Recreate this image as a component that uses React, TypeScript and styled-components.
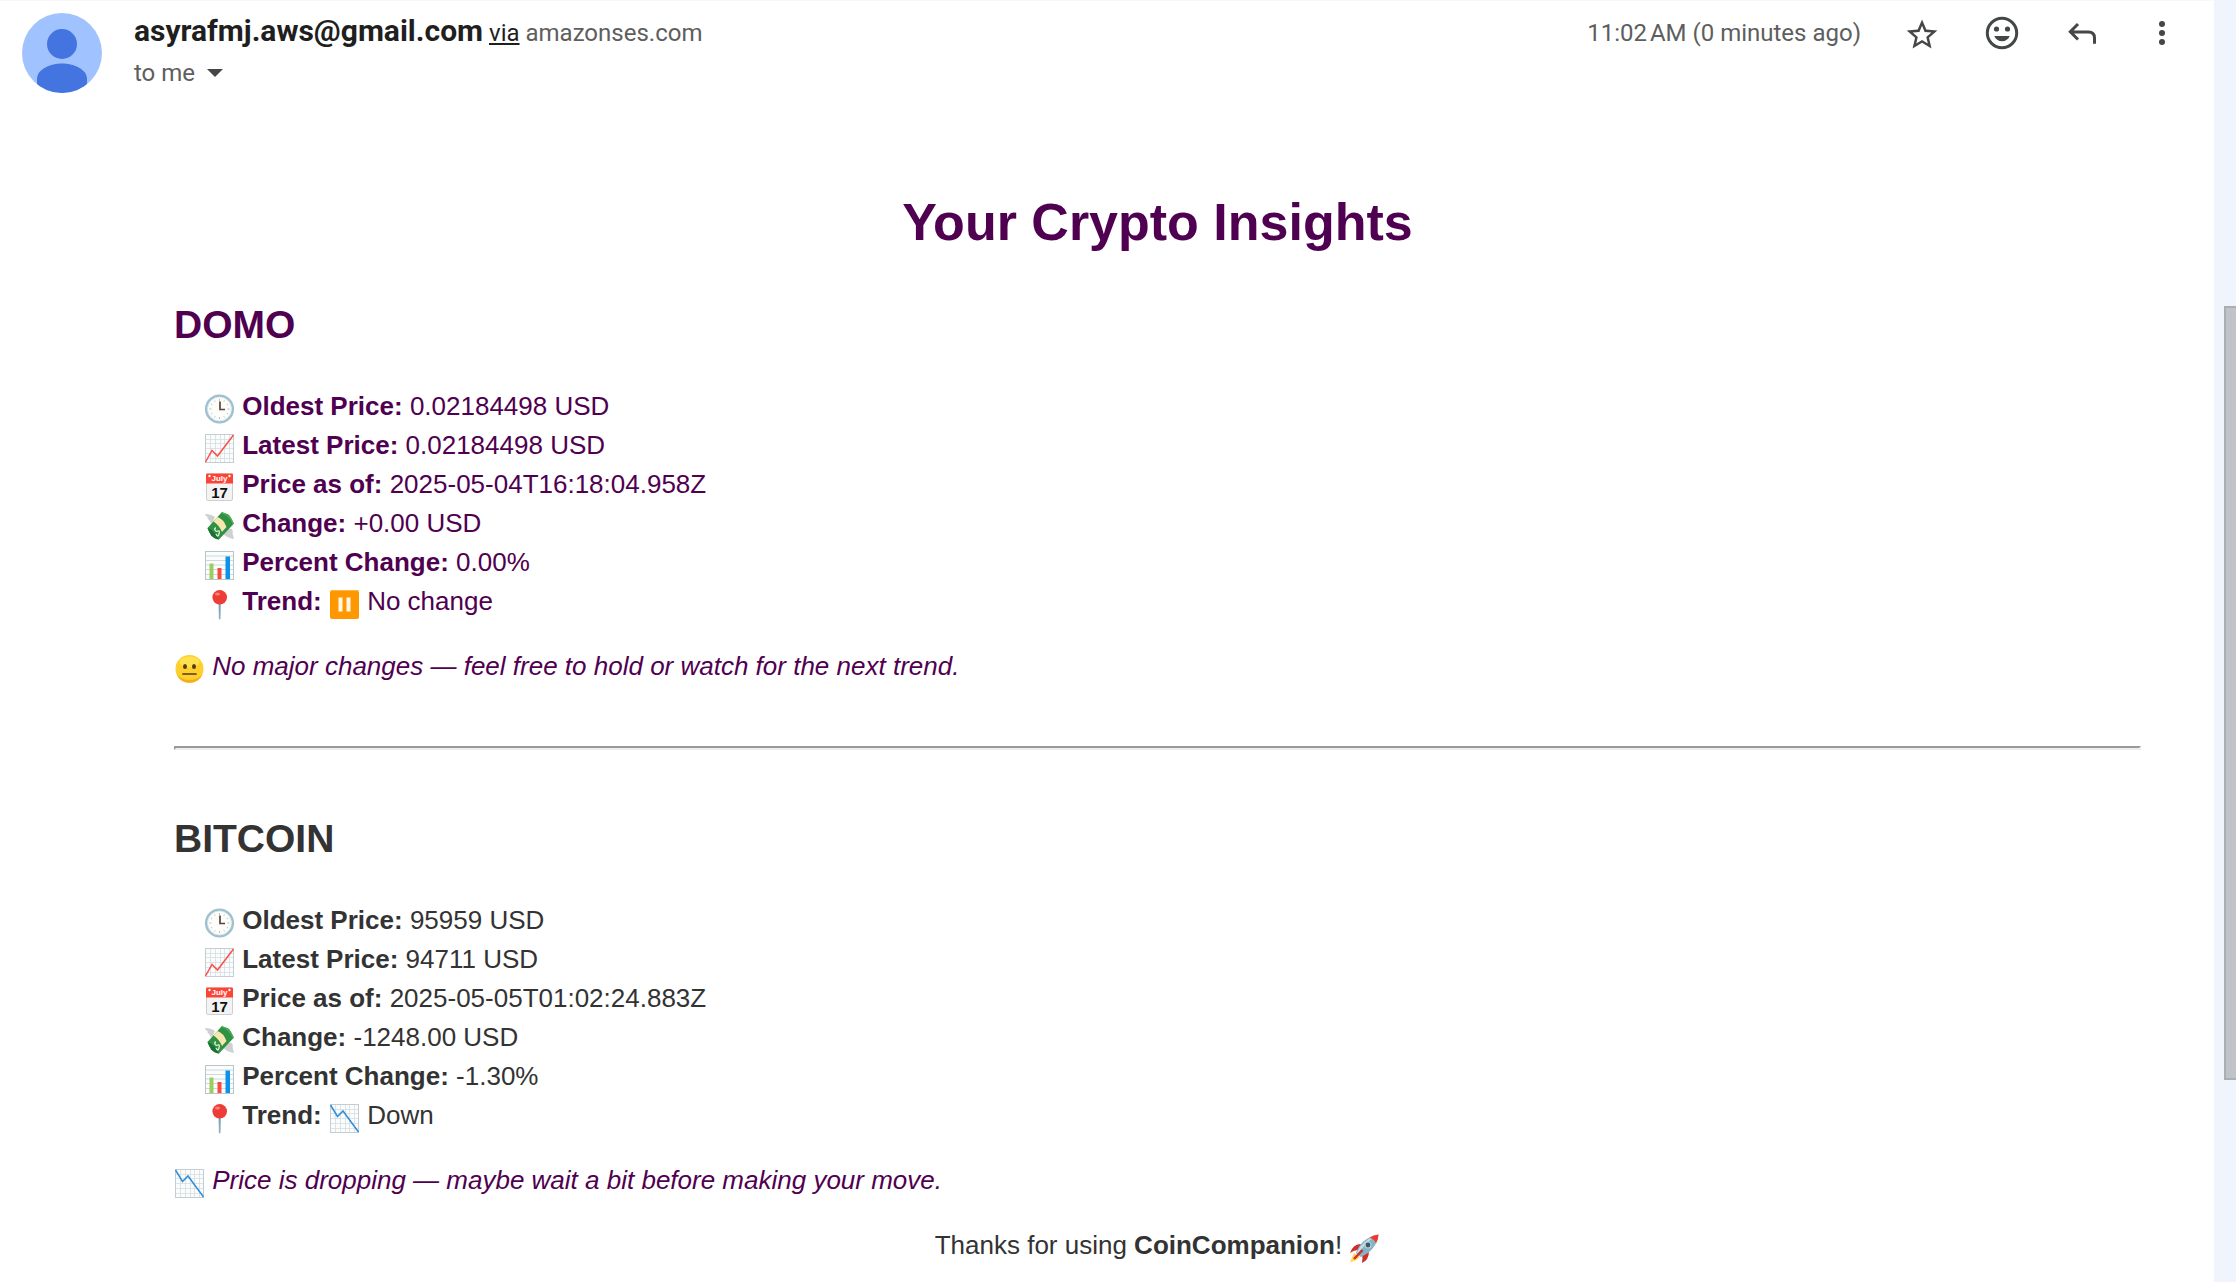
import React from 'react';
import styled, { createGlobalStyle } from 'styled-components';

const Global = createGlobalStyle`
  * { box-sizing: border-box; }
  body { margin: 0; background: #eff4fd; }
`;

const Shell = styled.div`
  display: flex;
  min-height: 100vh;
  overflow: hidden;
  font-family: "Liberation Sans", Arial, sans-serif;
`;

const Message = styled.article`
  flex: 1;
  min-width: 0;
  background: #fff;
  border-top: 1px solid #f8f8f9;
`;

const Rail = styled.aside`
  width: 22px;
  height: 100vh;
  padding: 306px 0 0 10px;
`;

const Thumb = styled.div`
  height: 774px;
  background: #c0c4c8;
  border: 2px solid #abafb2;
  border-right: 0;
`;

const Header = styled.header`
  display: flex;
  align-items: flex-start;
  padding: 12px 32px 0 22px;
  color: #5e5e5e;
  font-family: Roboto, "Noto Sans", sans-serif;
  font-size: 24px;
  line-height: 40px;
`;

const Sender = styled.div`
  flex: 1;
  padding-left: 32px;
`;

const Name = styled.span`
  color: #1f1f1f;
  font-size: 30px;
  font-weight: 700;
  line-height: 30px;
`;

const Via = styled.a`
  color: #1f1f1f;
  text-decoration: underline;
`;

const Recipient = styled.button`
  display: flex;
  align-items: center;
  gap: 12px;
  padding: 0;
  border: 0;
  background: none;
  color: inherit;
  font: inherit;
`;

const Actions = styled.div`
  display: flex;
  gap: 40px;
  padding-left: 41px;
`;

const IconButton = styled.button`
  display: flex;
  width: 40px;
  height: 40px;
  padding: 0;
  border: 0;
  background: none;
  color: #444746;
`;

const Body = styled.div`
  padding: 90px 73px 26px 174px;
  color: #333;
  font-size: 26px;
  line-height: 39px;
`;

const Title = styled.h1`
  margin: 0 0 35px;
  color: #500050;
  font-size: 52px;
  line-height: 78px;
  text-align: center;
`;

const Coin = styled.section<{ $quoted?: boolean }>`
  color: ${(p) => (p.$quoted ? '#500050' : '#333')};
`;

const CoinName = styled.h2`
  margin: 0 0 33px;
  font-size: 39px;
  line-height: 58px;
`;

const Facts = styled.ul`
  margin: 0 0 26px;
  padding: 0 0 0 30px;
  list-style: none;
`;

const Advice = styled.p`
  margin: 0;
  color: #500050;
  font-style: italic;
`;

const Divider = styled.hr`
  height: 4px;
  margin: 60px 0;
  border: 2px solid;
  border-color: #9a9a9a #eee #eee #9a9a9a;
`;

const Thanks = styled.p`
  margin: 26px 0 0;
  text-align: center;
`;

const Glyph = styled.svg`
  width: 31px;
  height: 30px;
  vertical-align: -9px;
`;

type Kind = 'clock' | 'up' | 'down' | 'calendar' | 'money' | 'bars' | 'pin' | 'pause' | 'neutral' | 'rocket';

const Grid = () => (
  <>
    <rect x="1.5" y="1.5" width="28" height="28" fill="#fbfdfd" stroke="#c3cdd3" />
    <path d="M6.5 2v27M11.5 2v27M16.5 2v27M20.5 2v27M25.5 2v27M2 6.5h27M2 10.5h27M2 15.5h27M2 20.5h27M2 25.5h27" stroke="#d5dde1" strokeWidth=".8" />
  </>
);

const art: Record<Kind, React.ReactNode> = {
  clock: (
    <>
      <circle cx="15.5" cy="15" r="13.3" fill="#fdfdfa" stroke="#9fc0cf" strokeWidth="2.6" />
      <circle cx="15.5" cy="15" r="12" fill="none" stroke="#d6e5eb" strokeWidth=".8" />
      <path d="M15.5 5v2M15.5 23v2M5.5 15h2M23.5 15h2M10.5 6.5l.7 1.2M20.5 6.5l-.7 1.2M7 10l1.2.7M24 10l-1.2.7M7 20l1.2-.7M24 20l-1.2-.7M10.5 23.5l.7-1.2M20.5 23.5l-.7-1.2" stroke="#a9abac" strokeWidth=".8" />
      <path d="M16 7.5V15.5h5" fill="none" stroke="#5c4240" strokeWidth="1.7" />
    </>
  ),
  up: (
    <>
      <Grid />
      <path d="M1.5 29L8 17.5l5.5 5.5L29.5 2" fill="none" stroke="#f9504a" strokeWidth="1.5" />
    </>
  ),
  down: (
    <>
      <Grid />
      <path d="M1.5 2L8.5 13.5l5.5-5.5L29.5 29" fill="none" stroke="#2f8fd8" strokeWidth="1.5" />
    </>
  ),
  calendar: (
    <>
      <rect x="2.5" y="2" width="26" height="26.5" rx="1.5" fill="#f3f3f3" stroke="#cfcfcf" />
      <path d="M2 2.5q0-1 1-1h25q1 0 1 1V11.5H2z" fill="#fb4438" />
      <circle cx="5.5" cy="4" r="1.2" fill="#fff" />
      <circle cx="25.5" cy="4" r="1.2" fill="#fff" />
      <text x="15.5" y="9" textAnchor="middle" fontSize="8" fontWeight="700" fill="#fff">July</text>
      <text x="15.5" y="25.5" textAnchor="middle" fontSize="15" fontWeight="700" fill="#111">17</text>
    </>
  ),
  money: (
    <>
      <path d="M1 3q6 0 10 3l-3 7Q6 11 5 9 3 8 3.5 6 1 5 1 3z" fill="#cdd1d2" />
      <path d="M20 17l8 1 1 3q-1 1 0 3l1 4q-7-1-12-6z" fill="#cdd1d2" />
      <path d="M3.5 17L17.5 1.5l6 1.5q3 1 6 10L15 28.5Q6 26 3.5 17z" fill="#2f9142" />
      <path d="M3.5 17Q10 19 15 28.5q-4 0-8-4z" fill="#1d7031" />
      <path d="M17.5 1.5Q26 4 29.5 13" fill="none" stroke="#4dac55" strokeWidth="1.5" />
      <path d="M9.5 10.5l4-4.5q6 2 9 10l-4.5 5Q15 14 9.5 10.5z" fill="#f7e6ad" />
      <path d="M12 17q-2 0-1 2t3 1 1 3-3 0" fill="none" stroke="#e5efdc" strokeWidth="1.3" />
    </>
  ),
  bars: (
    <>
      <rect x="1.5" y="1.5" width="28" height="28" fill="#fbfdfd" stroke="#b9c5cc" />
      <path d="M2 6h27M2 10.5h27M2 15h27M2 19.5h27M2 24.5h27" stroke="#cfd8dc" />
      <path d="M5.5 13.5h4V29h-4z" fill="#9bcd61" />
      <path d="M13.5 18h4v11h-4z" fill="#f94a3e" />
      <path d="M21.5 6.5h4.5V29h-4.5z" fill="#0b92ea" />
    </>
  ),
  pin: (
    <>
      <path d="M14.8 14h1.7l-.4 16h-.8z" fill="#7fa5b7" stroke="#7fa5b7" strokeWidth=".6" />
      <circle cx="15.7" cy="8.3" r="7.3" fill="#ee3c36" />
      <ellipse cx="13.5" cy="5" rx="2.5" ry="1.6" fill="#ff8178" />
    </>
  ),
  pause: (
    <>
      <rect x="1" y="1" width="29" height="29" rx="2" fill="#ff9800" />
      <path d="M2 3q0-1.5 1.5-1.5h24q1.5 0 1.5 1.5" fill="none" stroke="#ffb74a" />
      <path d="M9.5 8.5h4v14h-4zM17.5 8.5h4v14h-4z" fill="#fff8ea" />
    </>
  ),
  neutral: (
    <>
      <circle cx="15.5" cy="15" r="14" fill="#ffcf2e" />
      <path d="M2.5 20a14 14 0 0 0 26 0q-5 6-13 6t-13-6z" fill="#f5ae1b" />
      <ellipse cx="15.5" cy="8" rx="10" ry="5.5" fill="#ffe04d" />
      <ellipse cx="11" cy="12.5" rx="2" ry="2.5" fill="#543b12" />
      <ellipse cx="20" cy="12.5" rx="2" ry="2.5" fill="#543b12" />
      <path d="M9 20h13" stroke="#543b12" strokeWidth="1.7" strokeLinecap="round" />
    </>
  ),
  rocket: (
    <>
      <path d="M5 20l-4 9q5 0 10-5z" fill="#ffd75a" />
      <path d="M12 11q-8 0-11 9 4-3 8-3zM20 18q0 9-7 12 1-5 0-9z" fill="#cf2f2b" />
      <path d="M7 20Q12 5 29.5 1.5 27 18 11.5 24z" fill="#84b3c6" />
      <path d="M8 19Q14 7 27 3 16 10 9 21z" fill="#c4dde6" />
      <path d="M20.5 4.5Q25 2 29.5 1.5q0 4.5-2.5 9-1-4-6.5-6z" fill="#ee3b2f" />
      <circle cx="19" cy="12" r="3" fill="#3c5766" stroke="#b9ced6" strokeWidth="1.2" />
      <path d="M13.5 17L5 26" stroke="#cf2f2b" strokeWidth="2.5" />
    </>
  ),
};

const Emoji = ({ kind }: { kind: Kind }) => (
  <Glyph viewBox="0 0 31 30" overflow="visible" aria-hidden="true">
    {art[kind]}
  </Glyph>
);

interface CoinData {
  name: string;
  quoted?: boolean;
  facts: [Kind, string, string, Kind?][];
  mood: Kind;
  advice: string;
}

const domo: CoinData = {
  name: 'DOMO',
  quoted: true,
  facts: [
    ['clock', 'Oldest Price:', '0.02184498 USD'],
    ['up', 'Latest Price:', '0.02184498 USD'],
    ['calendar', 'Price as of:', '2025-05-04T16:18:04.958Z'],
    ['money', 'Change:', '+0.00 USD'],
    ['bars', 'Percent Change:', '0.00%'],
    ['pin', 'Trend:', 'No change', 'pause'],
  ],
  mood: 'neutral',
  advice: 'No major changes — feel free to hold or watch for the next trend.',
};

const bitcoin: CoinData = {
  name: 'BITCOIN',
  facts: [
    ['clock', 'Oldest Price:', '95959 USD'],
    ['up', 'Latest Price:', '94711 USD'],
    ['calendar', 'Price as of:', '2025-05-05T01:02:24.883Z'],
    ['money', 'Change:', '-1248.00 USD'],
    ['bars', 'Percent Change:', '-1.30%'],
    ['pin', 'Trend:', 'Down', 'down'],
  ],
  mood: 'down',
  advice: 'Price is dropping — maybe wait a bit before making your move.',
};

const CoinReport = ({ coin }: { coin: CoinData }) => (
  <Coin $quoted={coin.quoted}>
    <CoinName>{coin.name}</CoinName>
    <Facts>
      {coin.facts.map(([kind, label, value, mark]) => (
        <li key={label}>
          <Emoji kind={kind} /> <strong>{label}</strong> {mark && <><Emoji kind={mark} />{' '}</>}{value}
        </li>
      ))}
    </Facts>
    <Advice>
      <Emoji kind={coin.mood} /> {coin.advice}
    </Advice>
  </Coin>
);

const Avatar = () => (
  <svg width="80" height="80" viewBox="0 0 80 80" aria-hidden="true">
    <clipPath id="disc"><circle cx="40" cy="40" r="40" /></clipPath>
    <g clipPath="url(#disc)">
      <path d="M0 0h80v80H0z" fill="#a0c3ff" />
      <circle cx="40" cy="31" r="15" fill="#4374e0" />
      <path d="M15 80V66c0-10 14-15.5 25-15.5S65 56 65 66v14z" fill="#4374e0" />
    </g>
  </svg>
);

export default function App() {
  return (
    <Shell>
      <Global />
      <Message>
        <Header>
          <Avatar />
          <Sender>
            <div>
              <Name>asyrafmj.aws@gmail.com</Name> <Via href="#via">via</Via> amazonses.com
            </div>
            <Recipient>
              to me
              <svg width="16" height="8" viewBox="0 0 16 8" aria-hidden="true"><path d="M0 0h16L8 8z" fill="#444746" /></svg>
            </Recipient>
          </Sender>
          <time>{'11:02\u202fAM (0 minutes ago)'}</time>
          <Actions>
            <IconButton aria-label="Star">
              <svg width="40" height="40" viewBox="-1.07 -2.2 26.1 26.1" fill="currentColor"><path d="M22 9.24l-7.19-.62L12 2 9.19 8.63 2 9.24l5.46 4.73L5.82 21 12 17.27 18.18 21l-1.63-7.03zM12 15.4l-3.76 2.27 1-4.28-3.32-2.88 4.38-.38L12 6.1l1.71 4.04 4.38.38-3.32 2.88 1 4.28z" /></svg>
            </IconButton>
            <IconButton aria-label="Add reaction">
              <svg width="40" height="40" viewBox="0 0 40 40" fill="currentColor"><circle cx="20" cy="20" r="14.7" fill="none" stroke="currentColor" strokeWidth="3" /><circle cx="14.5" cy="16" r="2.6" /><circle cx="25.5" cy="16" r="2.6" /><path d="M12.3 23h15.4c-1.2 3.2-4.1 5.3-7.7 5.3s-6.5-2.1-7.7-5.3z" /></svg>
            </IconButton>
            <IconButton aria-label="Reply">
              <svg width="40" height="40" viewBox="0 0 40 40" fill="none" stroke="currentColor" strokeWidth="3"><path d="M16 11L8.3 18.8l7.7 7.7M8.3 19h18.2q6 0 6 6v5.7" /></svg>
            </IconButton>
            <IconButton aria-label="More">
              <svg width="40" height="40" viewBox="0 0 40 40" fill="currentColor"><circle cx="20" cy="11" r="3" /><circle cx="20" cy="20" r="3" /><circle cx="20" cy="29" r="3" /></svg>
            </IconButton>
          </Actions>
        </Header>
        <Body>
          <Title>Your Crypto Insights</Title>
          <CoinReport coin={domo} />
          <Divider />
          <CoinReport coin={bitcoin} />
          <Thanks>
            Thanks for using <strong>CoinCompanion</strong>! <Emoji kind="rocket" />
          </Thanks>
        </Body>
      </Message>
      <Rail>
        <Thumb />
      </Rail>
    </Shell>
  );
}
